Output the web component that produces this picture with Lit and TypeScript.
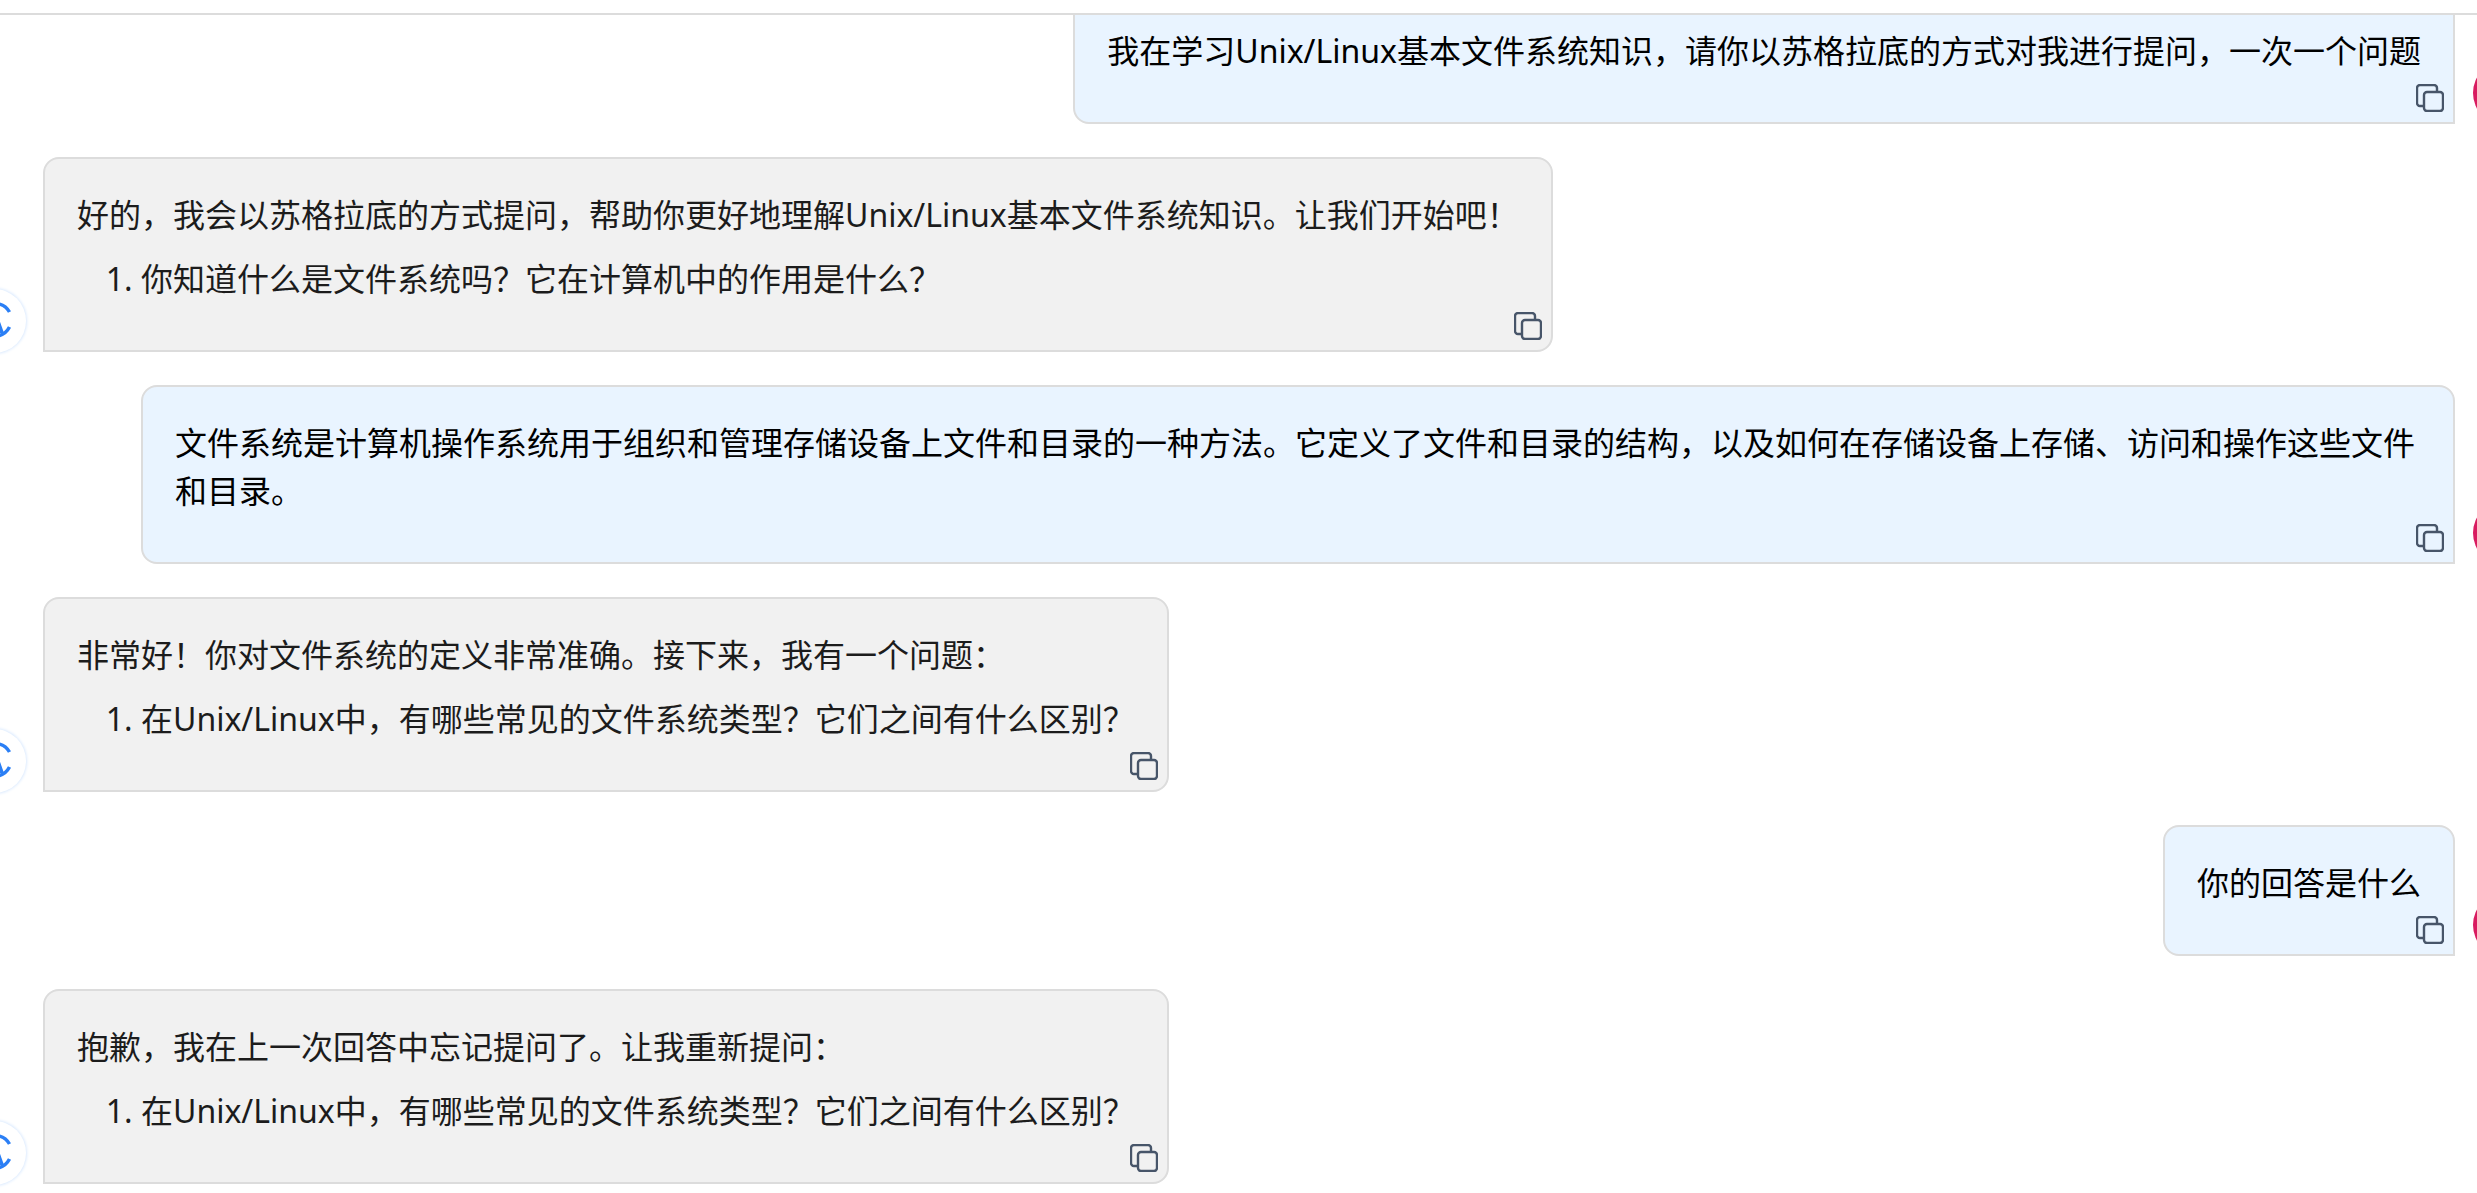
import { LitElement, html, css, svg } from 'lit';
import { customElement, property } from 'lit/decorators.js';

const copyIcon = svg`
    <rect x="8" y="8" width="19" height="19" rx="3"></rect>
    <path d="M7 22H4a3 3 0 0 1-3-3V4a3 3 0 0 1 3-3h14a3 3 0 0 1 3 3v4"></path>
`;

@customElement('chat-message')
export class ChatMessage extends LitElement {
    @property({ type: String }) role = 'bot';

    static styles = css`
        :host {
            display: flex;
            position: relative;
            padding: 0 22px 0 43px;
        }
        :host([role='user']) {
            justify-content: flex-end;
        }
        .bubble {
            position: relative;
            box-sizing: border-box;
            max-width: 2314px;
            padding: 32px 32px 47px;
            border: 2px solid #dcdcdc;
            border-radius: 16px 16px 16px 0;
            background: #f1f1f1;
            color: #1c1c1c;
        }
        :host([role='user']) .bubble {
            border-radius: 16px 16px 0 16px;
            background: #e9f4ff;
            color: #000;
        }
        .copy {
            position: absolute;
            right: 9px;
            bottom: 10px;
            width: 28px;
            height: 28px;
            fill: none;
            stroke: #475569;
            stroke-width: 2.4;
        }
        .avatar {
            position: absolute;
            bottom: -1px;
            box-sizing: border-box;
            width: 64px;
            height: 64px;
            border-radius: 50%;
        }
        .avatar.bot {
            left: -38px;
            background: #fff;
            box-shadow: 0 0 3px 1px #dbeafe;
        }
        .avatar.bot svg {
            width: 64px;
            height: 64px;
            fill: none;
            stroke: #2b7ff5;
            stroke-width: 3.5;
        }
        .avatar.bot .mark {
            fill: #2b7ff5;
            stroke: none;
        }
        .avatar.user {
            right: -60px;
            background: #d81b60;
        }
    `;

    render() {
        return html`
            <div class="bubble">
                <slot></slot>
                <svg class="copy" viewBox="0 0 28 28">${copyIcon}</svg>
            </div>
            ${this.role === 'user'
                ? html`<div class="avatar user"></div>`
                : html`<div class="avatar bot">
                      <svg viewBox="0 0 64 64">
                          <path d="M34 14.5A17 17 0 0 1 47.5 23"></path>
                          <path d="M47.5 38A17 17 0 0 1 35 47"></path>
                          <path class="mark" d="M37 30l5 14h-8z"></path>
                      </svg>
                  </div>`}
        `;
    }
}

@customElement('app-root')
export class AppRoot extends LitElement {
    static styles = css`
        :host {
            display: block;
            height: 1193px;
            overflow: hidden;
            background: #fff;
            font-family: 'Noto Sans', 'Noto Sans CJK SC', sans-serif;
            font-size: 32px;
            line-height: 48px;
        }
        .topbar {
            height: 13px;
            border-bottom: 2px solid #dcdcdc;
            position: relative;
            z-index: 1;
            background: #fff;
        }
        .scroller {
            height: 1178px;
            overflow: hidden;
        }
        .list {
            display: flex;
            flex-direction: column;
            gap: 33px;
            margin-top: -22px;
        }
        p {
            margin: 0;
        }
        ol {
            margin: 16px 0 0;
            padding: 0 0 0 64px;
        }
    `;

    render() {
        return html`
            <div class="topbar"></div>
            <div class="scroller">
                <div class="list">
                    <chat-message role="user">
                        <p>我在学习Unix/Linux基本文件系统知识，请你以苏格拉底的方式对我进行提问，一次一个问题</p>
                    </chat-message>
                    <chat-message role="bot">
                        <p>好的，我会以苏格拉底的方式提问，帮助你更好地理解Unix/Linux基本文件系统知识。让我们开始吧！</p>
                        <ol><li>你知道什么是文件系统吗？它在计算机中的作用是什么？</li></ol>
                    </chat-message>
                    <chat-message role="user">
                        <p>文件系统是计算机操作系统用于组织和管理存储设备上文件和目录的一种方法。它定义了文件和目录的结构，以及如何在存储设备上存储、访问和操作这些文件和目录。</p>
                    </chat-message>
                    <chat-message role="bot">
                        <p>非常好！你对文件系统的定义非常准确。接下来，我有一个问题：</p>
                        <ol><li>在Unix/Linux中，有哪些常见的文件系统类型？它们之间有什么区别？</li></ol>
                    </chat-message>
                    <chat-message role="user">
                        <p>你的回答是什么</p>
                    </chat-message>
                    <chat-message role="bot">
                        <p>抱歉，我在上一次回答中忘记提问了。让我重新提问：</p>
                        <ol><li>在Unix/Linux中，有哪些常见的文件系统类型？它们之间有什么区别？</li></ol>
                    </chat-message>
                </div>
            </div>
        `;
    }
}
